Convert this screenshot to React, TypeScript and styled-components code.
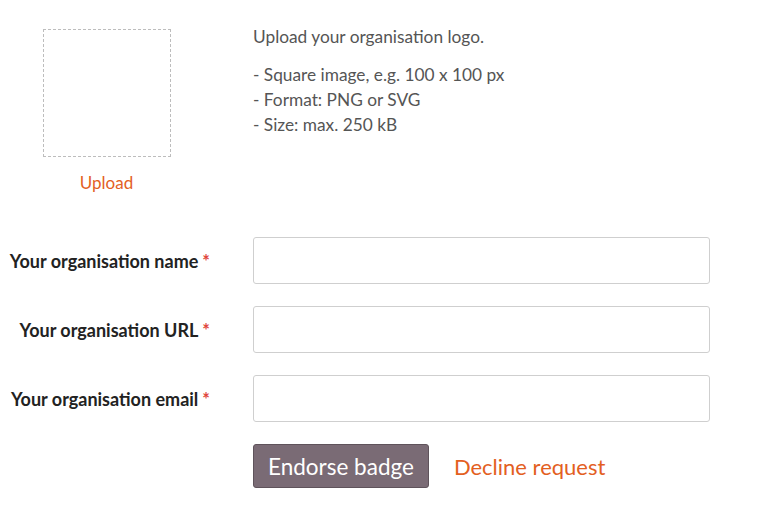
import React from 'react';
import styled, { createGlobalStyle } from 'styled-components';

const GlobalStyle = createGlobalStyle`
  html, body {
    margin: 0;
    padding: 0;
    background: #ffffff;
  }
  body {
    font-family: Lato, "Noto Sans", sans-serif;
    color: #333333;
  }
`;

const Page = styled.div`
  width: 784px;
  padding-top: 29px;
`;

const LogoSection = styled.div`
  display: grid;
  grid-template-columns: 213px 1fr;
  column-gap: 40px;
`;

const LogoCol = styled.div`
  display: flex;
  flex-direction: column;
  align-items: center;
`;

const DropBox = styled.div`
  width: 126px;
  height: 126px;
  border: 1px dashed #bdbdbd;
  box-sizing: content-box;
`;

const UploadLink = styled.a`
  margin-top: 16px;
  font-size: 17px;
  line-height: 20px;
  color: #e3601f;
  text-decoration: none;
  cursor: pointer;
`;

const Hint = styled.div`
  margin-top: -5px;
  font-size: 17.3px;
  line-height: 25px;
  color: #555555;

  p {
    margin: 0 0 13px;
  }
`;

const Form = styled.form`
  margin-top: 44px;
  display: grid;
  grid-template-columns: 210px 457px;
  column-gap: 43px;
  row-gap: 22px;
  align-items: center;
`;

const Label = styled.label`
  text-align: right;
  font-size: 18px;
  font-weight: 700;
  color: #222222;
  white-space: nowrap;
`;

const Required = styled.span`
  color: #e0463c;
  margin-left: 4px;
`;

const Input = styled.input`
  box-sizing: border-box;
  width: 457px;
  height: 47px;
  border: 1px solid #cfcfcf;
  border-radius: 3px;
  padding: 0 12px;
  font: inherit;
  font-size: 16px;
  outline: none;
`;

const Actions = styled.div`
  grid-column: 2;
  display: flex;
  align-items: center;
  gap: 25px;
`;

const PrimaryButton = styled.button`
  height: 44px;
  padding: 0 14px;
  background: #7a6b75;
  color: #ffffff;
  border: 1px solid #5f535b;
  border-radius: 3px;
  font-family: inherit;
  font-size: 22.5px;
  cursor: pointer;
`;

const TextLink = styled.a`
  font-size: 22px;
  color: #e3601f;
  text-decoration: none;
  cursor: pointer;
`;

const fields = [
  { id: 'org-name', label: 'Your organisation name' },
  { id: 'org-url', label: 'Your organisation URL' },
  { id: 'org-email', label: 'Your organisation email' },
];

export default function App() {
  return (
    <Page>
      <GlobalStyle />
      <LogoSection>
        <LogoCol>
          <DropBox />
          <UploadLink>Upload</UploadLink>
        </LogoCol>
        <Hint>
          <p>Upload your organisation logo.</p>
          <div>- Square image, e.g. 100 x 100 px</div>
          <div>- Format: PNG or SVG</div>
          <div>- Size: max. 250 kB</div>
        </Hint>
      </LogoSection>
      <Form onSubmit={e => e.preventDefault()}>
        {fields.map(f => (
          <React.Fragment key={f.id}>
            <Label htmlFor={f.id}>
              {f.label}
              <Required>*</Required>
            </Label>
            <Input id={f.id} type="text" />
          </React.Fragment>
        ))}
        <Actions>
          <PrimaryButton type="submit">Endorse badge</PrimaryButton>
          <TextLink>Decline request</TextLink>
        </Actions>
      </Form>
    </Page>
  );
}
